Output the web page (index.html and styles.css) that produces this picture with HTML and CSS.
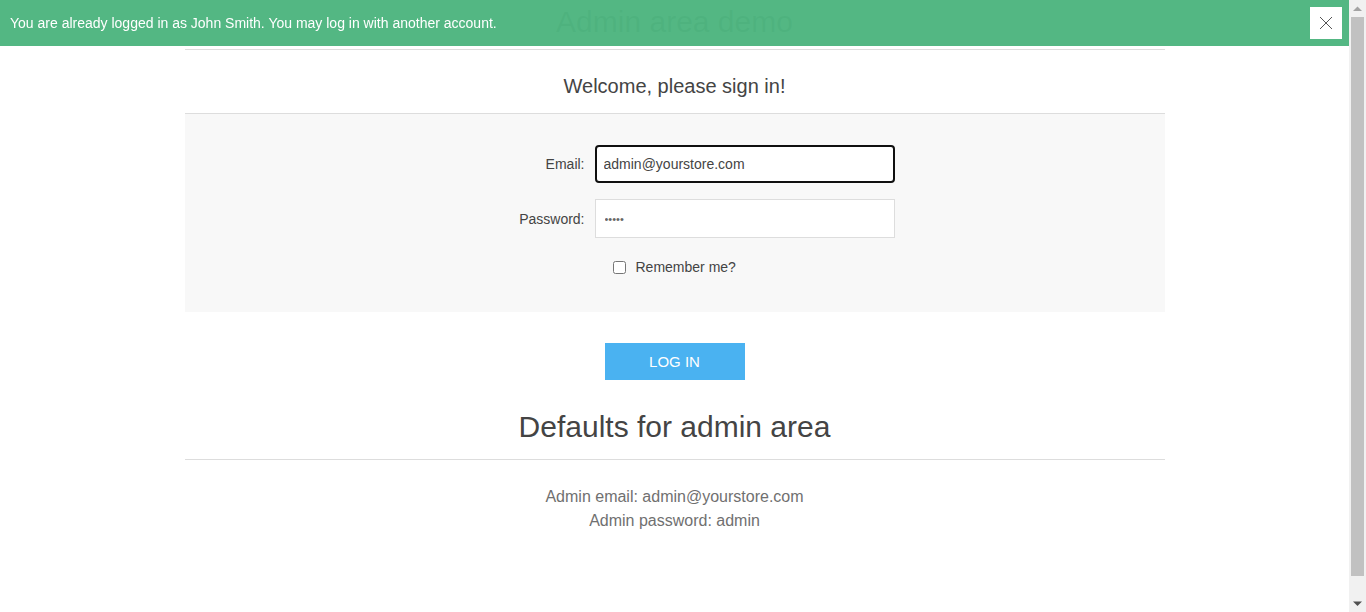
FILE: index.html
```html
<!DOCTYPE html>
<html lang="en">
<head>
<meta charset="utf-8">
<title>Admin area demo</title>
<link rel="stylesheet" href="styles.css">
</head>
<body>
<div class="notice">
  <span class="notice-text">You are already logged in as John Smith. You may log in with another account.</span>
  <button class="notice-close" type="button" aria-label="Close">
    <svg width="14" height="14" viewBox="0 0 14 14"><path d="M1 1L13 13M13 1L1 13" stroke="#555" stroke-width="1" fill="none"/></svg>
  </button>
</div>
<div class="fake-scrollbar" aria-hidden="true">
  <svg class="sb-arrow" width="17" height="17" viewBox="0 0 17 17"><path d="M4 11L8.5 6.5L13 11Z" fill="#a3a3a3"/></svg>
  <div class="sb-track"><div class="sb-thumb"></div></div>
  <svg class="sb-arrow" width="17" height="17" viewBox="0 0 17 17"><path d="M4 6.5L13 6.5L8.5 11Z" fill="#505050"/></svg>
</div>
<div class="page">
  <h1 class="page-title">Admin area demo</h1>
  <div class="section-title">Welcome, please sign in!</div>
  <form class="login-panel">
    <div class="form-row">
      <label class="form-label" for="email">Email:</label>
      <input class="form-input focused" id="email" type="text" value="admin@yourstore.com">
    </div>
    <div class="form-row">
      <label class="form-label" for="pwd">Password:</label>
      <input class="form-input password" id="pwd" type="password" value="admin">
    </div>
    <div class="form-row check-row">
      <div class="form-label"></div>
      <label class="remember"><input type="checkbox" class="remember-box"><span>Remember me?</span></label>
    </div>
  </form>
  <div class="button-row">
    <button class="login-btn" type="button">LOG IN</button>
  </div>
  <h2 class="defaults-title">Defaults for admin area</h2>
  <div class="defaults-text">
    <div>Admin email: admin@yourstore.com</div>
    <div>Admin password: admin</div>
  </div>
</div>
</body>
</html>
```
FILE: styles.css
```css
html, body {
  margin: 0;
  padding: 0;
  background: #fff;
}
body {
  font-family: "Liberation Sans", Arial, sans-serif;
  color: #444;
  font-size: 14px;
  padding-right: 17px;
}

.fake-scrollbar {
  position: fixed;
  top: 0;
  right: 0;
  bottom: 0;
  width: 17px;
  background: #f1f1f1;
  display: flex;
  flex-direction: column;
  z-index: 20;
}
.sb-arrow {
  display: block;
  flex: 0 0 17px;
}
.sb-track {
  flex: 1;
  padding: 0 2px 19px;
  display: flex;
}
.sb-thumb {
  flex: 1;
  background: #c1c1c1;
}

.notice {
  position: fixed;
  top: 0;
  left: 0;
  right: 17px;
  height: 46px;
  background: rgba(79, 181, 128, 0.975);
  display: flex;
  align-items: center;
  justify-content: space-between;
  padding: 0 7px 0 10px;
  z-index: 10;
}
.notice-text {
  color: #fff;
  font-size: 14px;
  line-height: 20px;
  margin-top: -1px;
}
.notice-close {
  width: 32px;
  height: 32px;
  background: #fff;
  border: 0;
  padding: 0;
  display: flex;
  align-items: center;
  justify-content: center;
}

.page {
  width: 980px;
  margin: 0 auto;
  padding-bottom: 102px;
}
.page-title {
  margin: 0;
  padding: 5px 0 10px;
  font-size: 30px;
  line-height: 34px;
  font-weight: normal;
  text-align: center;
  color: #444;
  border-bottom: 1px solid #ddd;
}
.section-title {
  padding: 24px 0 15px;
  font-size: 20px;
  line-height: 24px;
  text-align: center;
  border-bottom: 1px solid #ddd;
}
.login-panel {
  margin: 0;
  background: #f8f8f8;
  padding: 31px 0 35px;
  display: flex;
  flex-direction: column;
  gap: 16px;
}
.form-row {
  display: flex;
  align-items: center;
  gap: 10px;
}
.form-label {
  width: 400px;
  text-align: right;
  font-size: 14px;
  color: #444;
}
.form-input {
  box-sizing: border-box;
  width: 300px;
  height: 39px;
  border: 1px solid #ddd;
  background: #fff;
  padding: 0 8px;
  font-family: "Liberation Sans", Arial, sans-serif;
  font-size: 14px;
  color: #444;
  outline: none;
}
.form-input.password {
  font-size: 11px;
  color: #666;
  padding-left: 9px;
}
.form-input.focused {
  height: 38px;
  border: 2px solid #101010;
  border-radius: 4px;
  padding: 0 7px;
}
.check-row {
  margin-top: 3px;
  height: 20px;
}
.remember {
  display: flex;
  align-items: center;
  gap: 10px;
  padding-left: 18px;
  font-size: 14px;
  color: #444;
}
.remember-box {
  margin: 0;
  width: 13px;
  height: 13px;
}
.button-row {
  display: flex;
  justify-content: center;
  padding-top: 31px;
}
.login-btn {
  width: 140px;
  height: 37px;
  background: #4ab2f1;
  border: 0;
  color: #fff;
  font-family: "Liberation Sans", Arial, sans-serif;
  font-size: 15px;
  padding: 0;
}
.defaults-title {
  margin: 30px 0 0;
  padding-bottom: 15px;
  font-size: 30px;
  line-height: 34px;
  font-weight: normal;
  text-align: center;
  color: #444;
  border-bottom: 1px solid #ddd;
}
.defaults-text {
  padding-top: 25px;
  text-align: center;
  font-size: 16px;
  line-height: 24px;
  color: #707070;
}
```
